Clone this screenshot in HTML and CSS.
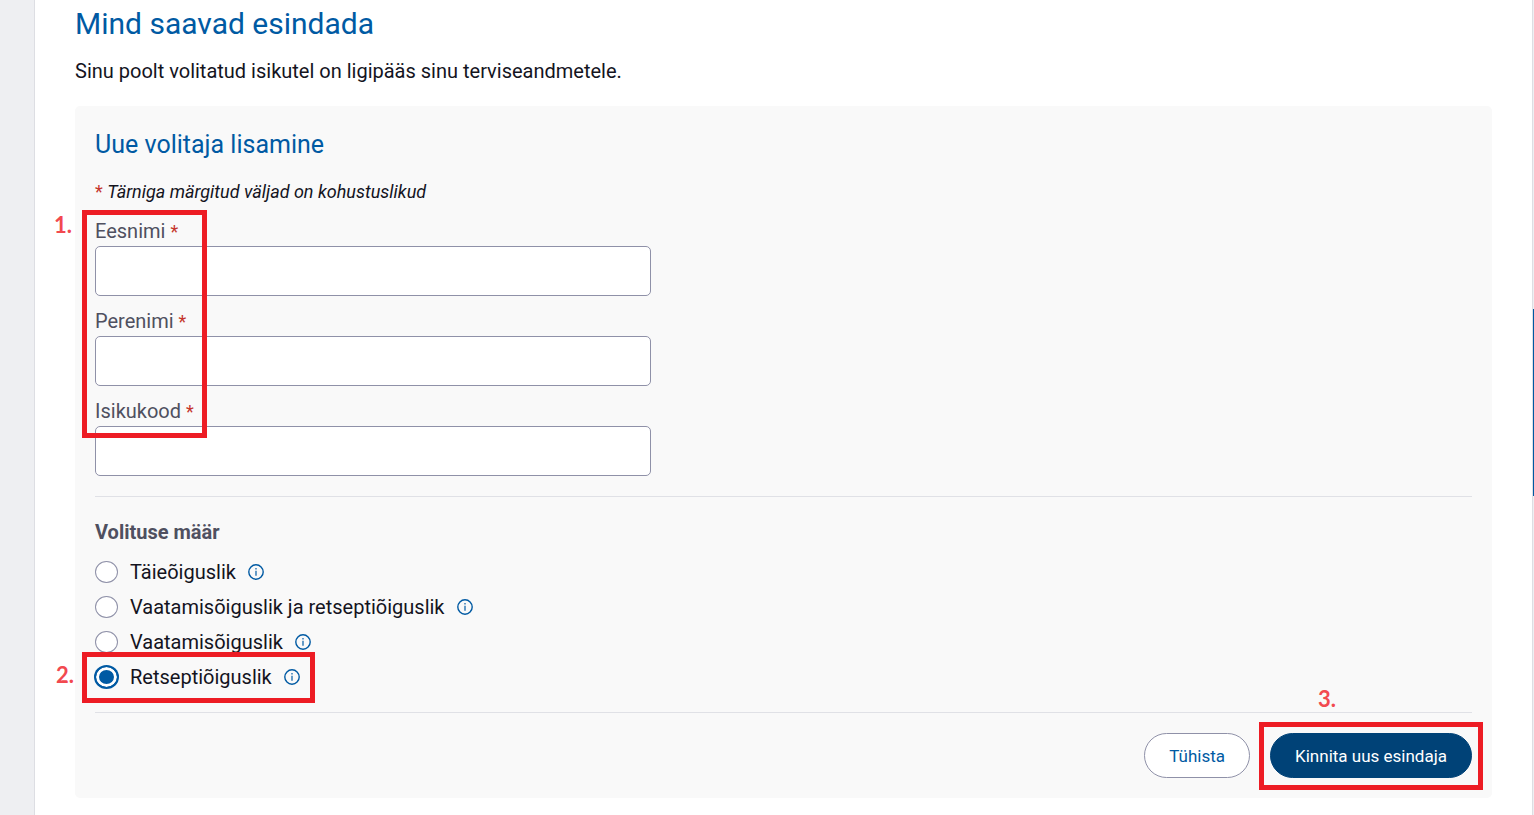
FILE: index.html
```html
<!DOCTYPE html>
<html lang="et">
<head>
    <meta charset="UTF-8">
    <meta name="viewport" content="width=device-width, initial-scale=1.0">
    <title>Mind saavad esindada</title>
    <link rel="stylesheet" href="styles.css">
</head>
<body>

<svg class="sprite" aria-hidden="true">
    <symbol id="info" viewBox="0 0 16 16">
        <circle cx="8" cy="8" r="7.2" fill="none" stroke="currentColor" stroke-width="1.4"/>
        <path d="M7.4 4.1h1.2v1.4H7.4zM7.4 6.8h1.2v5H7.4z" fill="currentColor"/>
    </symbol>
</svg>

<div class="page">
    <main class="content">
        <h1>Mind saavad esindada</h1>
        <p class="intro">Sinu poolt volitatud isikutel on ligipääs sinu terviseandmetele.</p>

        <form class="panel">
            <h2>Uue volitaja lisamine</h2>
            <p class="hint"><span class="star">*</span> <em>Tärniga märgitud väljad on kohustuslikud</em></p>

            <div class="fields">
                <div class="field">
                    <label for="first-name">Eesnimi <span class="star">*</span></label>
                    <input type="text" id="first-name" required>
                </div>
                <div class="field">
                    <label for="last-name">Perenimi <span class="star">*</span></label>
                    <input type="text" id="last-name" required>
                </div>
                <div class="field">
                    <label for="id-code">Isikukood <span class="star">*</span></label>
                    <input type="text" id="id-code" required>
                </div>
                <div class="mark mark-fields"></div>
                <span class="step step-fields">1.</span>
            </div>

            <fieldset class="scope">
                <legend>Volituse määr</legend>
                <div class="option">
                    <input type="radio" name="scope" id="scope-full">
                    <label for="scope-full">Täieõiguslik</label>
                    <button type="button" class="info" aria-label="Info"><svg><use href="#info"/></svg></button>
                </div>
                <div class="option">
                    <input type="radio" name="scope" id="scope-view-rx">
                    <label for="scope-view-rx">Vaatamisõiguslik ja retseptiõiguslik</label>
                    <button type="button" class="info" aria-label="Info"><svg><use href="#info"/></svg></button>
                </div>
                <div class="option">
                    <input type="radio" name="scope" id="scope-view">
                    <label for="scope-view">Vaatamisõiguslik</label>
                    <button type="button" class="info" aria-label="Info"><svg><use href="#info"/></svg></button>
                </div>
                <div class="option">
                    <input type="radio" name="scope" id="scope-rx" checked>
                    <label for="scope-rx">Retseptiõiguslik</label>
                    <button type="button" class="info" aria-label="Info"><svg><use href="#info"/></svg></button>
                    <div class="mark mark-option"></div>
                    <span class="step step-option">2.</span>
                </div>
            </fieldset>

            <div class="actions">
                <button type="button" class="btn">Tühista</button>
                <div class="confirm">
                    <button type="submit" class="btn btn-primary">Kinnita uus esindaja</button>
                    <div class="mark mark-confirm"></div>
                    <span class="step step-confirm">3.</span>
                </div>
            </div>
        </form>
    </main>
    <div class="side-tab"></div>
</div>

</body>
</html>
```

FILE: styles.css
```css
* {
    margin: 0;
    padding: 0;
    box-sizing: border-box;
}

body {
    font-family: Roboto, sans-serif;
    font-size: 20px;
    line-height: 30px;
    color: #14141e;
    background: #eeeff2;
}

.sprite {
    display: none;
}

.page {
    position: relative;
    min-height: 100vh;
    padding: 0 1px 0 34px;
}

.content {
    min-height: 100vh;
    padding: 4px 40px 17px;
    background: #fff;
    border: 1px solid #dddee3;
    border-width: 0 1px;
}

h1 {
    font-size: 30px;
    line-height: 40px;
    font-weight: 400;
    color: #005aa3;
}

.intro {
    margin: 12px 0 20px;
}

.panel {
    padding: 20px;
    background: #f9f9f9;
    border-radius: 5px;
}

h2 {
    font-size: 25px;
    line-height: 38px;
    font-weight: 400;
    color: #005aa3;
}

.hint {
    margin: 13px 0 9px;
    font-size: 18px;
}

.star {
    color: #c5352d;
}

.fields {
    position: relative;
    display: flex;
    flex-direction: column;
    gap: 10px;
    padding-bottom: 20px;
    border-bottom: 1px solid #e0e1e6;
}

.field {
    width: 50%;
    max-width: 556px;
}

.field label {
    display: block;
    color: #4f5060;
}

.field .star {
    font-size: 18px;
    line-height: 1;
}

.field input {
    display: block;
    width: 100%;
    height: 50px;
    padding: 0 15px;
    font: inherit;
    background: #fff;
    border: 1px solid #8f91a8;
    border-radius: 5px;
}

.scope {
    padding: 20px 0;
    border: 0;
    border-bottom: 1px solid #e0e1e6;
}

.scope legend {
    float: left;
    width: 100%;
    margin-bottom: 10px;
    font-weight: 700;
    color: #4f5060;
}

.option {
    position: relative;
    clear: both;
    display: flex;
    align-items: center;
    height: 30px;
    margin-bottom: 5px;
}

.option:last-child {
    margin-bottom: 0;
}

.option input {
    appearance: none;
    width: 23px;
    height: 22px;
    margin-right: 12px;
    background: #fff;
    border: 1px solid #8f91a8;
    border-radius: 50%;
}

.option input:checked {
    background: #005aa3;
    border-color: #005aa3;
    box-shadow: 0 0 0 1px #005aa3, inset 0 0 0 3px #fff;
}

.info {
    width: 16px;
    height: 16px;
    margin-left: 12px;
    color: #005aa3;
    background: none;
    border: 0;
    cursor: pointer;
}

.info svg {
    display: block;
    width: 16px;
    height: 16px;
}

.actions {
    display: flex;
    justify-content: flex-end;
    gap: 20px;
    padding-top: 20px;
}

.confirm {
    position: relative;
}

.btn {
    display: block;
    height: 45px;
    padding: 0 24px;
    font-family: inherit;
    font-size: 17px;
    color: #005aa3;
    background: #fff;
    border: 1px solid #8f91a8;
    border-radius: 23px;
    cursor: pointer;
}

.btn-primary {
    color: #fff;
    background: #004277;
    border-color: #004277;
}

/* numbered guide marks */
.mark {
    position: absolute;
    border: 5px solid #ed1c24;
    pointer-events: none;
}

.mark-fields {
    top: -6px;
    left: -13px;
    width: 125px;
    height: 228px;
}

.mark-option {
    top: -10px;
    left: -13px;
    width: 233px;
    height: 51px;
}

.mark-confirm {
    inset: -11px -11px -12px;
}

.step {
    position: absolute;
    font-family: Lato, sans-serif;
    font-size: 22px;
    font-weight: 700;
    color: #f2494f;
}

.step-fields {
    top: -6px;
    left: -41px;
}

.step-option {
    top: -2px;
    left: -39px;
}

.step-confirm {
    top: -49px;
    left: 48px;
}

.side-tab {
    position: absolute;
    top: 309px;
    right: 0;
    width: 1px;
    height: 187px;
    background: #005aa3;
}
```
